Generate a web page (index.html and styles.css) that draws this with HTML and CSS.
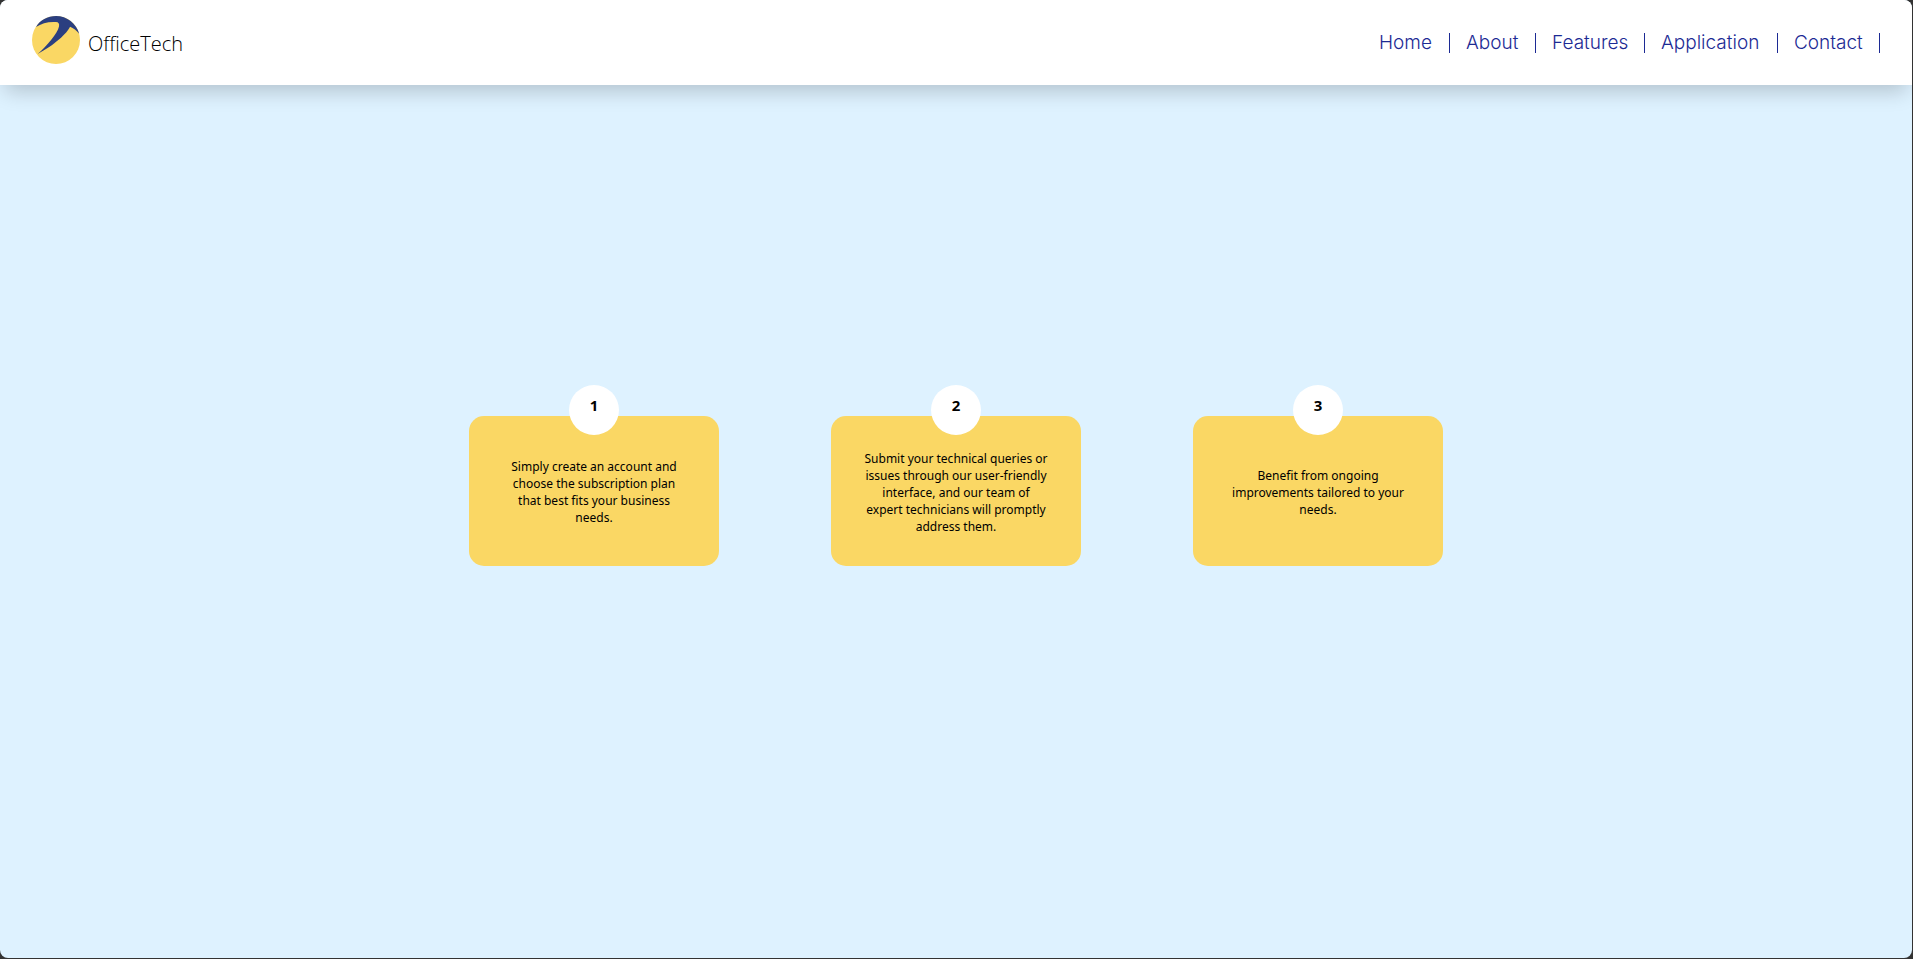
FILE: index.html
```html
<!DOCTYPE html>
<html lang="en">
<head>
  <meta charset="utf-8">
  <meta name="viewport" content="width=device-width, initial-scale=1">
  <title>OfficeTech</title>
  <link rel="stylesheet" href="styles.css">
</head>
<body>
  <div class="page">
    <header class="header">
      <div class="brand">
        <svg class="brand-logo" viewBox="0 0 48 48" aria-hidden="true">
          <circle cx="24" cy="24" r="24" fill="#fad764"/>
          <path fill="#2b3f80" d="M4 11C8 4 15.500 0 24 0c11 0 20.500 7.500 23.200 17.800C44.500 14.500 41.500 12 38 10.800C35.500 17 22 29.500 5.600 38C14.500 30.500 25.500 17.500 27 10.500C27.500 7.500 26.500 6.300 24 6.100C16 5.600 9.500 7.500 4 11Z"/>
        </svg>
        <span class="brand-name">OfficeTech</span>
      </div>
      <nav class="nav">
        <a class="nav-link" href="#home">Home</a>
        <a class="nav-link" href="#about">About</a>
        <a class="nav-link" href="#features">Features</a>
        <a class="nav-link" href="#application">Application</a>
        <a class="nav-link" href="#contact">Contact</a>
      </nav>
    </header>
    <main class="steps">
      <section class="card">
        <h2 class="badge">1</h2>
        <p class="card-text">Simply create an account and choose the subscription plan that best fits your business needs.</p>
      </section>
      <section class="card">
        <h2 class="badge">2</h2>
        <p class="card-text">Submit your technical queries or issues through our user-friendly interface, and our team of expert technicians will promptly address them.</p>
      </section>
      <section class="card">
        <h2 class="badge">3</h2>
        <p class="card-text">Benefit from ongoing improvements tailored to your needs.</p>
      </section>
    </main>
  </div>
</body>
</html>
```
FILE: styles.css
```css
* {
  box-sizing: border-box;
}

body {
  margin: 0;
  padding: 0 1px 1px 0;
  min-height: 100vh;
  display: flex;
  background: #333;
  color: #000;
  font-family: "Noto Sans", "Open Sans", sans-serif;
}

.page {
  flex: 1;
  display: flex;
  flex-direction: column;
  overflow: hidden;
  border-radius: 8px;
  background: #def2ff;
}

.header {
  display: flex;
  justify-content: space-between;
  align-items: center;
  padding: 16px 32px 21px;
  background: #fff;
  box-shadow: 0 11px 20px -5px rgba(0, 0, 0, 0.2);
}

.brand {
  display: flex;
  gap: 8px;
}

.brand-logo {
  width: 48px;
  height: 48px;
}

.brand-name {
  padding-top: 14px;
  font-family: "Open Sans", sans-serif;
  font-size: 20px;
  font-weight: 300;
  line-height: 28px;
}

.nav {
  display: grid;
  grid-template-columns: 71px 70px 93px 117px 86px;
  gap: 16px;
  padding-top: 5px;
}

.nav-link {
  border-right: 1px solid #1c2a94;
  color: #1c2a94;
  font-family: Inter, sans-serif;
  font-size: 19px;
  font-weight: 300;
  line-height: 20px;
  text-decoration: none;
}

.steps {
  flex: 1;
  display: flex;
  flex-wrap: wrap;
  justify-content: center;
  align-content: center;
  gap: 112px;
  padding: 32px 32px 94px;
}

.card {
  position: relative;
  display: flex;
  align-items: center;
  justify-content: center;
  width: 250px;
  min-height: 150px;
  padding: 26px 32px 23px;
  border-radius: 15px;
  background: #fad764;
}

.badge {
  position: absolute;
  top: -31px;
  left: 100px;
  width: 50px;
  height: 50px;
  margin: 0;
  padding-top: 10px;
  border-radius: 50%;
  background: #fff;
  font-size: 15px;
  line-height: 20px;
  text-align: center;
}

.card-text {
  margin: 0;
  font-size: 12px;
  line-height: 17px;
  text-align: center;
}
```
